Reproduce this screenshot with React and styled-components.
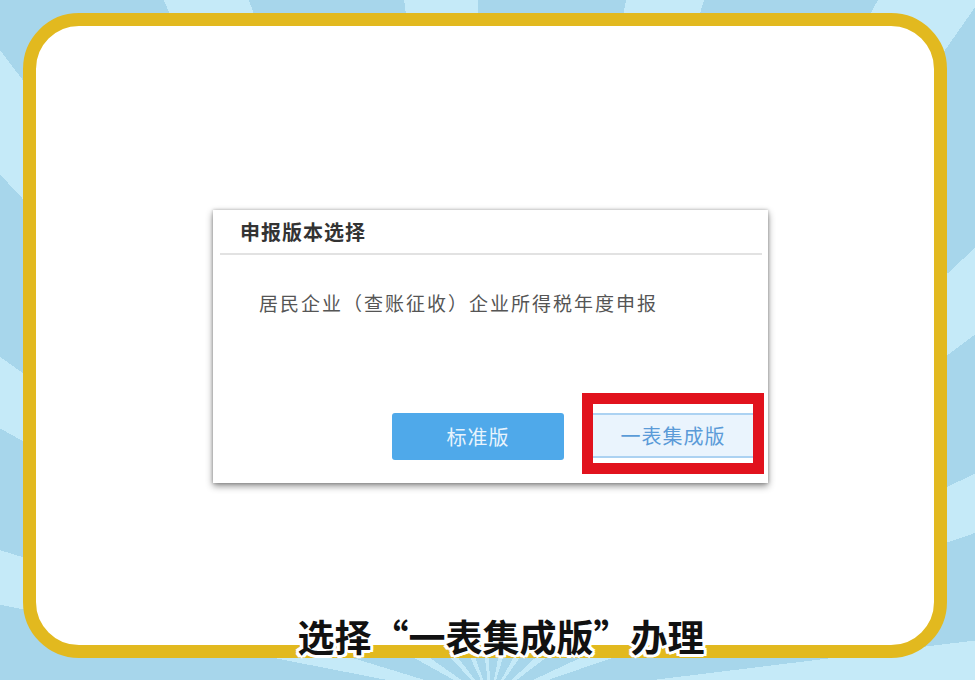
import React from 'react'
import styled, { createGlobalStyle } from 'styled-components'

const GlobalStyle = createGlobalStyle`
  html, body {
    margin: 0;
    padding: 0;
  }
  body {
    font-family: "Noto Sans CJK SC", "Noto Sans", sans-serif;
  }
`

const Stage = styled.div`
  position: relative;
  width: 975px;
  height: 680px;
  overflow: hidden;
  box-sizing: border-box;
  padding: 13px 28px 22px 23px;
  background: repeating-conic-gradient(
    from 11deg at 490px 700px,
    #c5eaf8 0deg 6deg,
    #a7d6eb 6deg 18deg
  );
`

const Frame = styled.div`
  box-sizing: border-box;
  width: 924px;
  height: 645px;
  border: 13px solid #e2b91f;
  border-radius: 56px;
  background: #fff;
  padding: 184px 0 0 177px;
`

const Dialog = styled.div`
  width: 555px;
  height: 273px;
  box-sizing: border-box;
  background: #fff;
  box-shadow: 0 3px 7px rgba(0, 0, 0, 0.45), 0 0 3px rgba(0, 0, 0, 0.25);
  display: flex;
  flex-direction: column;
  padding: 0 4px 9px 7px;
`

const Title = styled.div`
  height: 43px;
  display: flex;
  align-items: center;
  padding-left: 20px;
  font-size: 20px;
  font-weight: 700;
  letter-spacing: 1px;
  color: #333;
  border-bottom: 2px solid #e2e2e2;
  margin-right: 2px;
`

const Body = styled.div`
  flex: 1;
  padding: 33px 0 0 39px;
  font-size: 19px;
  letter-spacing: 2px;
  line-height: 30px;
  color: #555;
`

const Actions = styled.div`
  display: flex;
  justify-content: flex-end;
  align-items: center;
  gap: 18px;
`

const Button = styled.button`
  box-sizing: border-box;
  width: ${({ $wide }) => ($wide ? '160px' : '172px')};
  height: ${({ $wide }) => ($wide ? '45px' : '47px')};
  font-family: inherit;
  font-size: 20px;
  letter-spacing: 1px;
  border-radius: ${({ $primary }) => ($primary ? '3px' : '0')};
  border: none;
  cursor: pointer;
  background: ${({ $primary }) => ($primary ? '#4fa9ea' : '#eaf4fd')};
  color: ${({ $primary }) => ($primary ? '#e8f4fd' : '#5b9bd8')};
  border-top: ${({ $primary }) => ($primary ? 'none' : '2px solid #acd2f2')};
  border-bottom: ${({ $primary }) => ($primary ? 'none' : '2px solid #acd2f2')};
  margin-top: ${({ $primary }) => ($primary ? '6px' : '0')};
`

const Highlight = styled.div`
  box-sizing: border-box;
  width: 182px;
  height: 81px;
  border: 11px solid #e1121d;
  background: #fff;
  padding: 9px 0 0 0;
`

const Caption = styled.div`
  position: absolute;
  left: 0;
  right: 0;
  top: 614px;
  padding-left: 27px;
  text-align: center;
  font-size: 37px;
  line-height: 44px;
  font-weight: 700;
  color: #111;
  text-shadow:
    3px 0 0 #fff, -3px 0 0 #fff, 0 3px 0 #fff, 0 -3px 0 #fff,
    2px 2px 0 #fff, -2px 2px 0 #fff, 2px -2px 0 #fff, -2px -2px 0 #fff,
    3px 2px 0 #fff, -3px 2px 0 #fff, 3px -2px 0 #fff, -3px -2px 0 #fff;
`

export default function App() {
  return (
    <>
      <GlobalStyle />
      <Stage>
        <Frame>
          <Dialog>
            <Title>申报版本选择</Title>
            <Body>居民企业（查账征收）企业所得税年度申报</Body>
            <Actions>
              <Button $primary>标准版</Button>
              <Highlight>
                <Button $wide>一表集成版</Button>
              </Highlight>
            </Actions>
          </Dialog>
        </Frame>
        <Caption>选择“一表集成版”办理</Caption>
      </Stage>
    </>
  )
}
